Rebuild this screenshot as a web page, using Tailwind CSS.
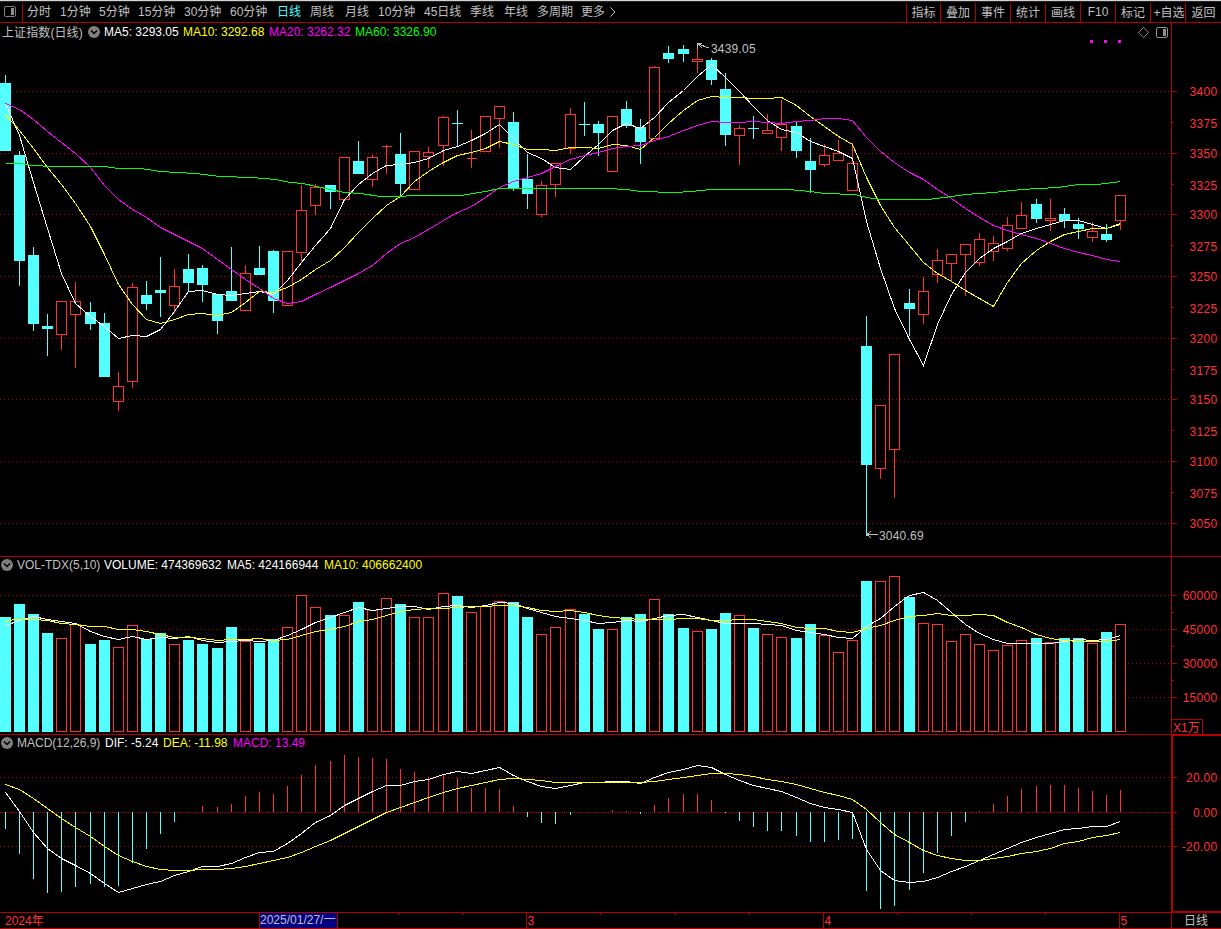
<!DOCTYPE html>
<html lang="zh-CN">
<head>
    <meta charset="UTF-8">
    <meta name="viewport" content="width=device-width, initial-scale=1.0">
    <title>上证指数(日线)</title>
    <script src="https://cdn.jsdelivr.net/npm/@tailwindcss/browser@4"></script>
    <style>
        body, svg text {
            font-family: 'Liberation Sans', 'Noto Sans CJK SC', sans-serif;
            font-size: 12px;
        }
    </style>
</head>
<body class="bg-black text-[#c0c0c0] w-[1221px] h-[929px] overflow-hidden flex flex-col">

    <!-- Toolbar -->
    <header class="h-[23px] shrink-0 flex border-b border-[#b40000] whitespace-nowrap leading-[20px] bg-linear-to-b from-[#d4d4d4] from-[1px] via-[#707070] via-[1px] to-black to-[2px]">
        <div class="w-[23px] mt-[3px] border-r border-[#b40000] shrink-0">
            <svg class="block ml-[4px] mt-[3px]" width="12" height="11" viewBox="0 0 12 11">
                <rect x="0.5" y="0.5" width="11" height="10" rx="1.5" fill="none" stroke="#808080"/>
                <rect x="7" y="2" width="3" height="7" fill="#909090"/>
            </svg>
        </div>
        <nav class="flex pl-[4px] pt-[3px] leading-[19px] flex-1">
            <span class="w-[33px]">分时</span>
            <span class="w-[39px]">1分钟</span>
            <span class="w-[39px]">5分钟</span>
            <span class="w-[46px]">15分钟</span>
            <span class="w-[46px]">30分钟</span>
            <span class="w-[47px]">60分钟</span>
            <span class="w-[33px] text-[#54ffff]">日线</span>
            <span class="w-[35px]">周线</span>
            <span class="w-[33px]">月线</span>
            <span class="w-[46px]">10分钟</span>
            <span class="w-[46px]">45日线</span>
            <span class="w-[34px]">季线</span>
            <span class="w-[33px]">年线</span>
            <span class="w-[44px]">多周期</span>
            <span class="flex">更多
                <svg class="ml-[5px] mt-[4px]" width="6" height="10" viewBox="0 0 6 10" fill="none" stroke="#c0c0c0"><path d="M0.5 0.5L5 5L0.5 9.5"/></svg>
            </span>
        </nav>
        <div class="flex mt-[3px] leading-[20px] text-center">
            <span class="w-[34px] border-l border-[#b40000]">指标</span>
            <span class="w-[35px] border-l border-[#b40000]">叠加</span>
            <span class="w-[35px] border-l border-[#b40000]">事件</span>
            <span class="w-[35px] border-l border-[#b40000]">统计</span>
            <span class="w-[35px] border-l border-[#b40000]">画线</span>
            <span class="w-[35px] border-l border-[#b40000] leading-[19px]">F10</span>
            <span class="w-[35px] border-l border-[#b40000]">标记</span>
            <span class="w-[35px] border-l border-[#b40000] pl-[2px] flex justify-center">+自选</span>
            <span class="w-[36px] border-l border-[#b40000]">返回</span>
        </div>
    </header>

    <!-- Price -->
    <section class="relative h-[534px] shrink-0 border-b border-[#b40000]">
        <div class="absolute left-0 top-0 h-[18px] flex items-center whitespace-nowrap leading-[18px]">
            <span class="w-[88px] pl-[2px] pt-px tracking-[0.1px]">上证指数(日线)</span>
            <svg class="w-[16px] h-[12px]" viewBox="0 0 16 12"><circle cx="6" cy="6" r="6" fill="#808080"/><path d="M3 4.5L6 7.5L9 4.5" fill="none" stroke="#000" stroke-width="1.5"/></svg>
            <span class="w-[79px] text-white">MA5: 3293.05</span>
            <span class="w-[86px] text-[#ffff00]">MA10: 3292.68</span>
            <span class="w-[86px] text-[#ff00ff]">MA20: 3262.32</span>
            <span class="text-[#00ff00]">MA60: 3326.90</span>
        </div>
        <svg id="price" class="block" width="1221" height="533" viewBox="0 23 1221 533" shape-rendering="crispEdges"></svg>
    </section>

    <!-- Volume -->
    <section class="relative h-[178px] shrink-0 border-b border-[#b40000]">
        <div class="absolute left-0 top-0 h-[16px] flex items-center whitespace-nowrap leading-[16px]">
            <svg class="w-[17px] h-[12px] pl-[1px]" viewBox="0 0 16 12"><circle cx="6" cy="6" r="6" fill="#808080"/><path d="M3 4.5L6 7.5L9 4.5" fill="none" stroke="#000" stroke-width="1.5"/></svg>
            <span class="w-[87px]">VOL-TDX(5,10)</span>
            <span class="w-[123px] text-white">VOLUME: 474369632</span>
            <span class="w-[97px] text-white">MA5: 424166944</span>
            <span class="text-[#ffff00]">MA10: 406662400</span>
        </div>
        <svg id="volume" class="block" width="1221" height="177" viewBox="0 557 1221 177" shape-rendering="crispEdges"></svg>
    </section>

    <!-- MACD -->
    <section class="relative h-[178px] shrink-0 border-b border-[#b40000]">
        <div class="absolute left-0 top-0 h-[16px] flex items-center whitespace-nowrap leading-[16px]">
            <svg class="w-[17px] h-[12px] pl-[1px]" viewBox="0 0 16 12"><circle cx="6" cy="6" r="6" fill="#808080"/><path d="M3 4.5L6 7.5L9 4.5" fill="none" stroke="#000" stroke-width="1.5"/></svg>
            <span class="w-[88px]">MACD(12,26,9)</span>
            <span class="w-[58px] text-white">DIF: -5.24</span>
            <span class="w-[70px] text-[#ffff00]">DEA: -11.98</span>
            <span class="text-[#ff00ff]">MACD: 13.49</span>
        </div>
        <svg id="macd" class="block" width="1221" height="177" viewBox="0 735 1221 177" shape-rendering="crispEdges"></svg>
    </section>

    <!-- Dates -->
    <footer class="relative h-[16px] shrink-0 border-b border-[#b40000]">
        <svg id="dates" class="block" width="1221" height="15" viewBox="0 913 1221 15" shape-rendering="crispEdges"></svg>
    </footer>

    <script>
        // [colour, high, body top, body bottom, low]
        const candles = [
            ['c',75,83,151,151],['c',151,155,261,286],['c',247,255,324,331],['c',314,326,329,356],['r',301,301,334,350],
            ['r',282,301,314,368],['c',302,312,324,330],['c',313,323,377,377],['r',372,386,401,411],['r',283,287,381,388],
            ['c',281,295,304,310],['c',257,290,293,317],['r',269,286,305,313],['c',254,269,283,291],['c',265,268,285,302],
            ['c',294,294,321,334],['c',247,291,301,301],['r',265,273,310,310],['c',246,268,275,275],['c',250,251,301,313],
            ['r',251,251,305,305],['r',185,210,252,261],['r',184,187,205,215],['c',185,185,192,209],['r',157,157,199,201],
            ['c',141,161,174,174],['r',155,157,179,187],['r',145,146,146,174],['c',133,154,184,196],['r',151,151,189,189],
            ['r',147,152,156,168],['r',116,117,145,166],['c',110,123,124,146],['r',130,158,158,168],['r',116,116,151,151],
            ['r',106,106,118,148],['c',112,122,188,191],['c',154,179,194,209],['r',181,185,214,217],['r',163,163,184,197],
            ['r',108,114,148,154],['c',102,124,125,136],['c',121,124,133,156],['r',116,116,171,171],['c',101,109,126,128],
            ['c',119,127,142,164],['r',66,67,138,138],['c',46,53,59,63],['c',45,49,54,62],['r',44,59,61,73],
            ['c',58,60,80,85],['c',73,89,135,146],['r',125,128,135,165],['c',116,128,129,139],['r',114,130,133,133],
            ['r',100,124,137,151],['c',122,126,151,158],['c',138,161,170,193],['r',144,155,164,167],['r',140,153,160,160],
            ['r',143,163,190,190],['c',316,346,465,536],['r',405,405,468,479],['r',354,354,449,498],['c',289,303,309,336],
            ['r',277,291,314,324],['r',249,260,274,283],['r',254,254,263,282],['r',244,244,254,296],['r',233,239,262,266],
            ['r',236,243,251,261],['r',217,225,248,251],['r',202,215,228,228],['c',199,204,219,223],['r',199,218,220,231],
            ['c',208,214,221,228],['c',218,224,229,239],['r',222,231,237,242],['c',224,234,240,242],['r',195,195,220,230]
        ];
        const volumes = [
            617,604,614,633,638,624,644,640,647,625,639,633,644,640,644,648,627,641,643,639,
            627,595,607,615,615,602,610,598,604,617,617,593,596,612,606,601,602,617,634,627,
            609,614,629,629,617,614,599,614,628,631,629,613,615,628,634,637,638,624,635,652,
            640,581,581,576,597,623,624,641,634,644,650,645,640,638,642,638,638,643,632,624
        ];
        const macd = [
            829,854,879,893,892,887,884,887,886,863,849,834,822,812,806,807,804,796,792,794,
            786,775,765,761,755,757,758,759,769,772,777,775,778,788,788,789,806,817,823,824,
            815,812,812,810,811,814,805,798,794,794,800,813,821,827,831,831,836,842,842,840,
            839,891,909,906,890,873,853,836,822,811,804,796,789,786,785,785,788,791,795,790
        ];
        const dif = [
            792,811,832,848,858,865,873,883,892,888,884,881,875,871,866,866,863,857,852,851,
            843,833,822,815,805,798,791,785,785,781,779,774,771,773,770,767,775,781,786,788,
            785,782,782,781,781,783,777,772,769,765,767,774,780,785,788,791,797,803,807,809,
            812,849,870,880,882,881,877,871,866,860,854,848,842,837,833,829,828,826,826,821
        ];
        const dea = [
            784,789,798,808,818,827,836,846,855,861,866,869,870,870,869,869,868,866,863,860,
            857,852,846,840,833,826,819,812,807,802,797,792,788,785,782,779,778,779,780,782,
            782,782,782,782,782,782,781,779,777,775,773,773,774,776,779,781,784,788,792,795,
            799,809,822,834,842,850,855,858,860,860,858,856,853,851,848,843,841,837,835,832
        ];

        const RED = '#ff3232', CYAN = '#54ffff', LINE = '#b40000';

        // centre column of bar i, pitch slightly over 14px
        const cx = i => 5 + 14 * i + Math.floor((i - 5.85) / 8.3 + 1);
        const rect = (x, y, w, h, fill) => `<rect x="${x}" y="${y}" width="${w}" height="${h}" fill="${fill}"/>`;
        const text = (x, y, s, fill, anchor = 'start', spacing = 0) => `<text x="${x}" y="${y}" fill="${fill}" text-anchor="${anchor}" letter-spacing="${spacing}">${s}</text>`;
        const label = (y, s) => text(1217.5, y, s, RED, 'end', 0.3);
        const box = (x, top, bottom) => `<path d="M${x - 4.5} ${top + 0.5}h10v${bottom - top}h-10z" fill="none" stroke="${RED}"/>`;
        const poly = (pts, color) => `<polyline fill="none" stroke="${color}" points="${pts.map(p => (p[0] + 0.5) + ',' + (p[1] + 0.5)).join(' ')}"/>`;
        const series = (ys, color) => poly(ys.map((y, i) => [cx(i), y]), color);
        const dots = (y, step = 4) => `<path d="M0 ${y + 0.5}H1171" stroke="${LINE}" stroke-dasharray="1 ${step - 1}"/>`;

        // moving average; head holds the values before a full window exists
        function average(values, n, head) {
            return values.map((v, i) => {
                if (i < n - 1) return head[i];
                let sum = 0;
                for (let k = i - n + 1; k <= i; k++) sum += values[k];
                return Math.round(sum / n);
            });
        }

        function drawPrice() {
            let out = '';
            const major = [91, 153, 214, 276, 338, 399, 461, 523];
            const minor = [122, 184, 245, 307, 369, 430, 492];
            major.forEach((y, i) => {
                out += dots(y) + rect(1172, y, 5, 1, LINE) + label(y + 5, 3400 - i * 50);
            });
            minor.forEach((y, i) => {
                out += rect(1172, y, 2, 1, LINE) + label(y + 6, 3375 - i * 50);
            });
            out += rect(1171, 23, 1, 533, LINE);
            candles.forEach(([type, high, top, bottom, low], i) => {
                const x = cx(i);
                if (type === 'c') {
                    out += rect(x, high, 1, low - high, CYAN) + rect(x - 5, top, 11, bottom - top, CYAN);
                } else {
                    out += rect(x, high, 1, top - high, RED) + rect(x, bottom, 1, low - bottom, RED) + box(x, top, bottom);
                }
            });
            const close = candles.map(c => c[0] === 'c' ? c[3] : c[2]);
            out += series(average(close, 5, [103, 135, 182, 228]), '#ffffff');
            out += series(average(close, 10, [114, 130, 148, 167, 184, 203, 226, 254, 284]), '#ffff00');
            out += series(average(close, 20, [103, 109, 119, 131, 142, 153, 167, 185, 199, 209, 217, 227, 234, 241, 248, 259, 269, 279, 288]), '#ff00ff');
            out += poly([[5,163],[21,163],[31,165],[54,166],[104,166],[118,168],[140,168],[160,171],[195,173],[220,176],[252,177],
                [275,179],[290,182],[302,183],[316,186],[330,189],[344,192],[360,193],[380,196],[402,196],[410,195],[460,195],[485,191],
                [499,188],[606,188],[626,189],[640,191],[675,192],[690,191],[711,189],[788,189],[810,191],[824,193],[855,194],[866,197],
                [880,199],[928,199],[951,196],[965,194],[993,192],[1021,189],[1057,187],[1078,184],[1097,184],[1120,181]], '#00ff00');
            // high and low marks
            out += '<path d="M698 44L709 48M697.5 49V43.5H702M698 44L702 48" fill="none" stroke="#c0c0c0"/>' + text(711, 53, '3439.05', '#c0c0c0', 'start', 0.2);
            out += '<path d="M867 534.5H878M871 531L867 534.5L871 538" fill="none" stroke="#c0c0c0"/>' + text(879, 540, '3040.69', '#c0c0c0', 'start', 0.2);
            out += [1090, 1104, 1118].map(x => rect(x, 40, 3, 3, '#ff00ff')).join('');
            out += '<path d="M1143.5 27.5L1148.5 32.5L1143.5 37.5L1138.5 32.5Z" fill="none" stroke="#808080"/>';
            out += '<rect x="1156.5" y="27.5" width="11" height="10" rx="1.5" fill="none" stroke="#909090" shape-rendering="auto"/>' + rect(1163, 29, 3, 7, '#909090');
            document.getElementById('price').innerHTML = out;
        }

        function drawVolume() {
            let out = '';
            [595, 629, 663, 697].forEach((y, i) => {
                out += dots(y) + rect(1172, y, 5, 1, LINE) + label(y + 5, 60000 - i * 15000);
            });
            [612, 646, 680].forEach(y => out += rect(1172, y, 2, 1, LINE));
            volumes.forEach((y, i) => {
                const x = cx(i);
                // hollow bars cover the grid behind them
                out += candles[i][0] === 'c' ? rect(x - 5, y, 11, 732 - y, CYAN) : rect(x - 5, y, 11, 732 - y, '#000') + box(x, y, 731);
            });
            out += series(average(volumes, 5, [625, 620, 616, 619]), '#ffffff');
            out += series(average(volumes, 10, [620, 619, 619, 620, 623, 624, 626, 626, 629]), '#ffff00');
            out += rect(1171, 557, 1, 177, LINE);
            out += `<path d="M1171.5 719.5H1202.5V734" fill="none" stroke="${LINE}"/>` + text(1173, 732, 'X1万', RED);
            document.getElementById('volume').innerHTML = out;
        }

        function drawMacd() {
            let out = dots(777) + dots(812, 2) + dots(846);
            [[777, '20.00'], [812, '0.00'], [846, '-20.00']].forEach(([y, s]) => {
                out += rect(1173, y, 4, 1, LINE) + label(y + 5, s);
            });
            [795, 829].forEach(y => out += rect(1173, y, 1, 1, LINE));
            macd.forEach((y, i) => {
                out += y > 812 ? rect(cx(i), 812, 1, y - 812, CYAN) : rect(cx(i), y, 1, 812 - y, RED);
            });
            out += series(dif, '#ffffff') + series(dea, '#ffff00');
            out += rect(1171, 735, 2, 177, LINE) + rect(1171, 735, 50, 1, LINE) + rect(1171, 911, 50, 1, LINE);
            document.getElementById('macd').innerHTML = out;
        }

        function drawDates() {
            let out = text(5, 925, '2024年', RED);
            out += rect(259, 913, 79, 15, LINE) + rect(260, 913, 77, 15, '#000080') + text(260, 924, '2025/01/27/一', '#c0c0c0');
            [[526, '3'], [823, '4'], [1119, '5']].forEach(([x, s]) => out += rect(x, 913, 1, 15, LINE) + text(x + 1.5, 925, s, RED));
            [399, 463, 600, 675, 749, 897, 971, 1045].forEach(x => out += rect(x, 913, 1, 2, LINE));
            out += rect(1171, 913, 1, 15, LINE) + text(1184, 925, '日线', '#c0c0c0');
            document.getElementById('dates').innerHTML = out;
        }

        drawPrice();
        drawVolume();
        drawMacd();
        drawDates();
    </script>
</body>
</html>
